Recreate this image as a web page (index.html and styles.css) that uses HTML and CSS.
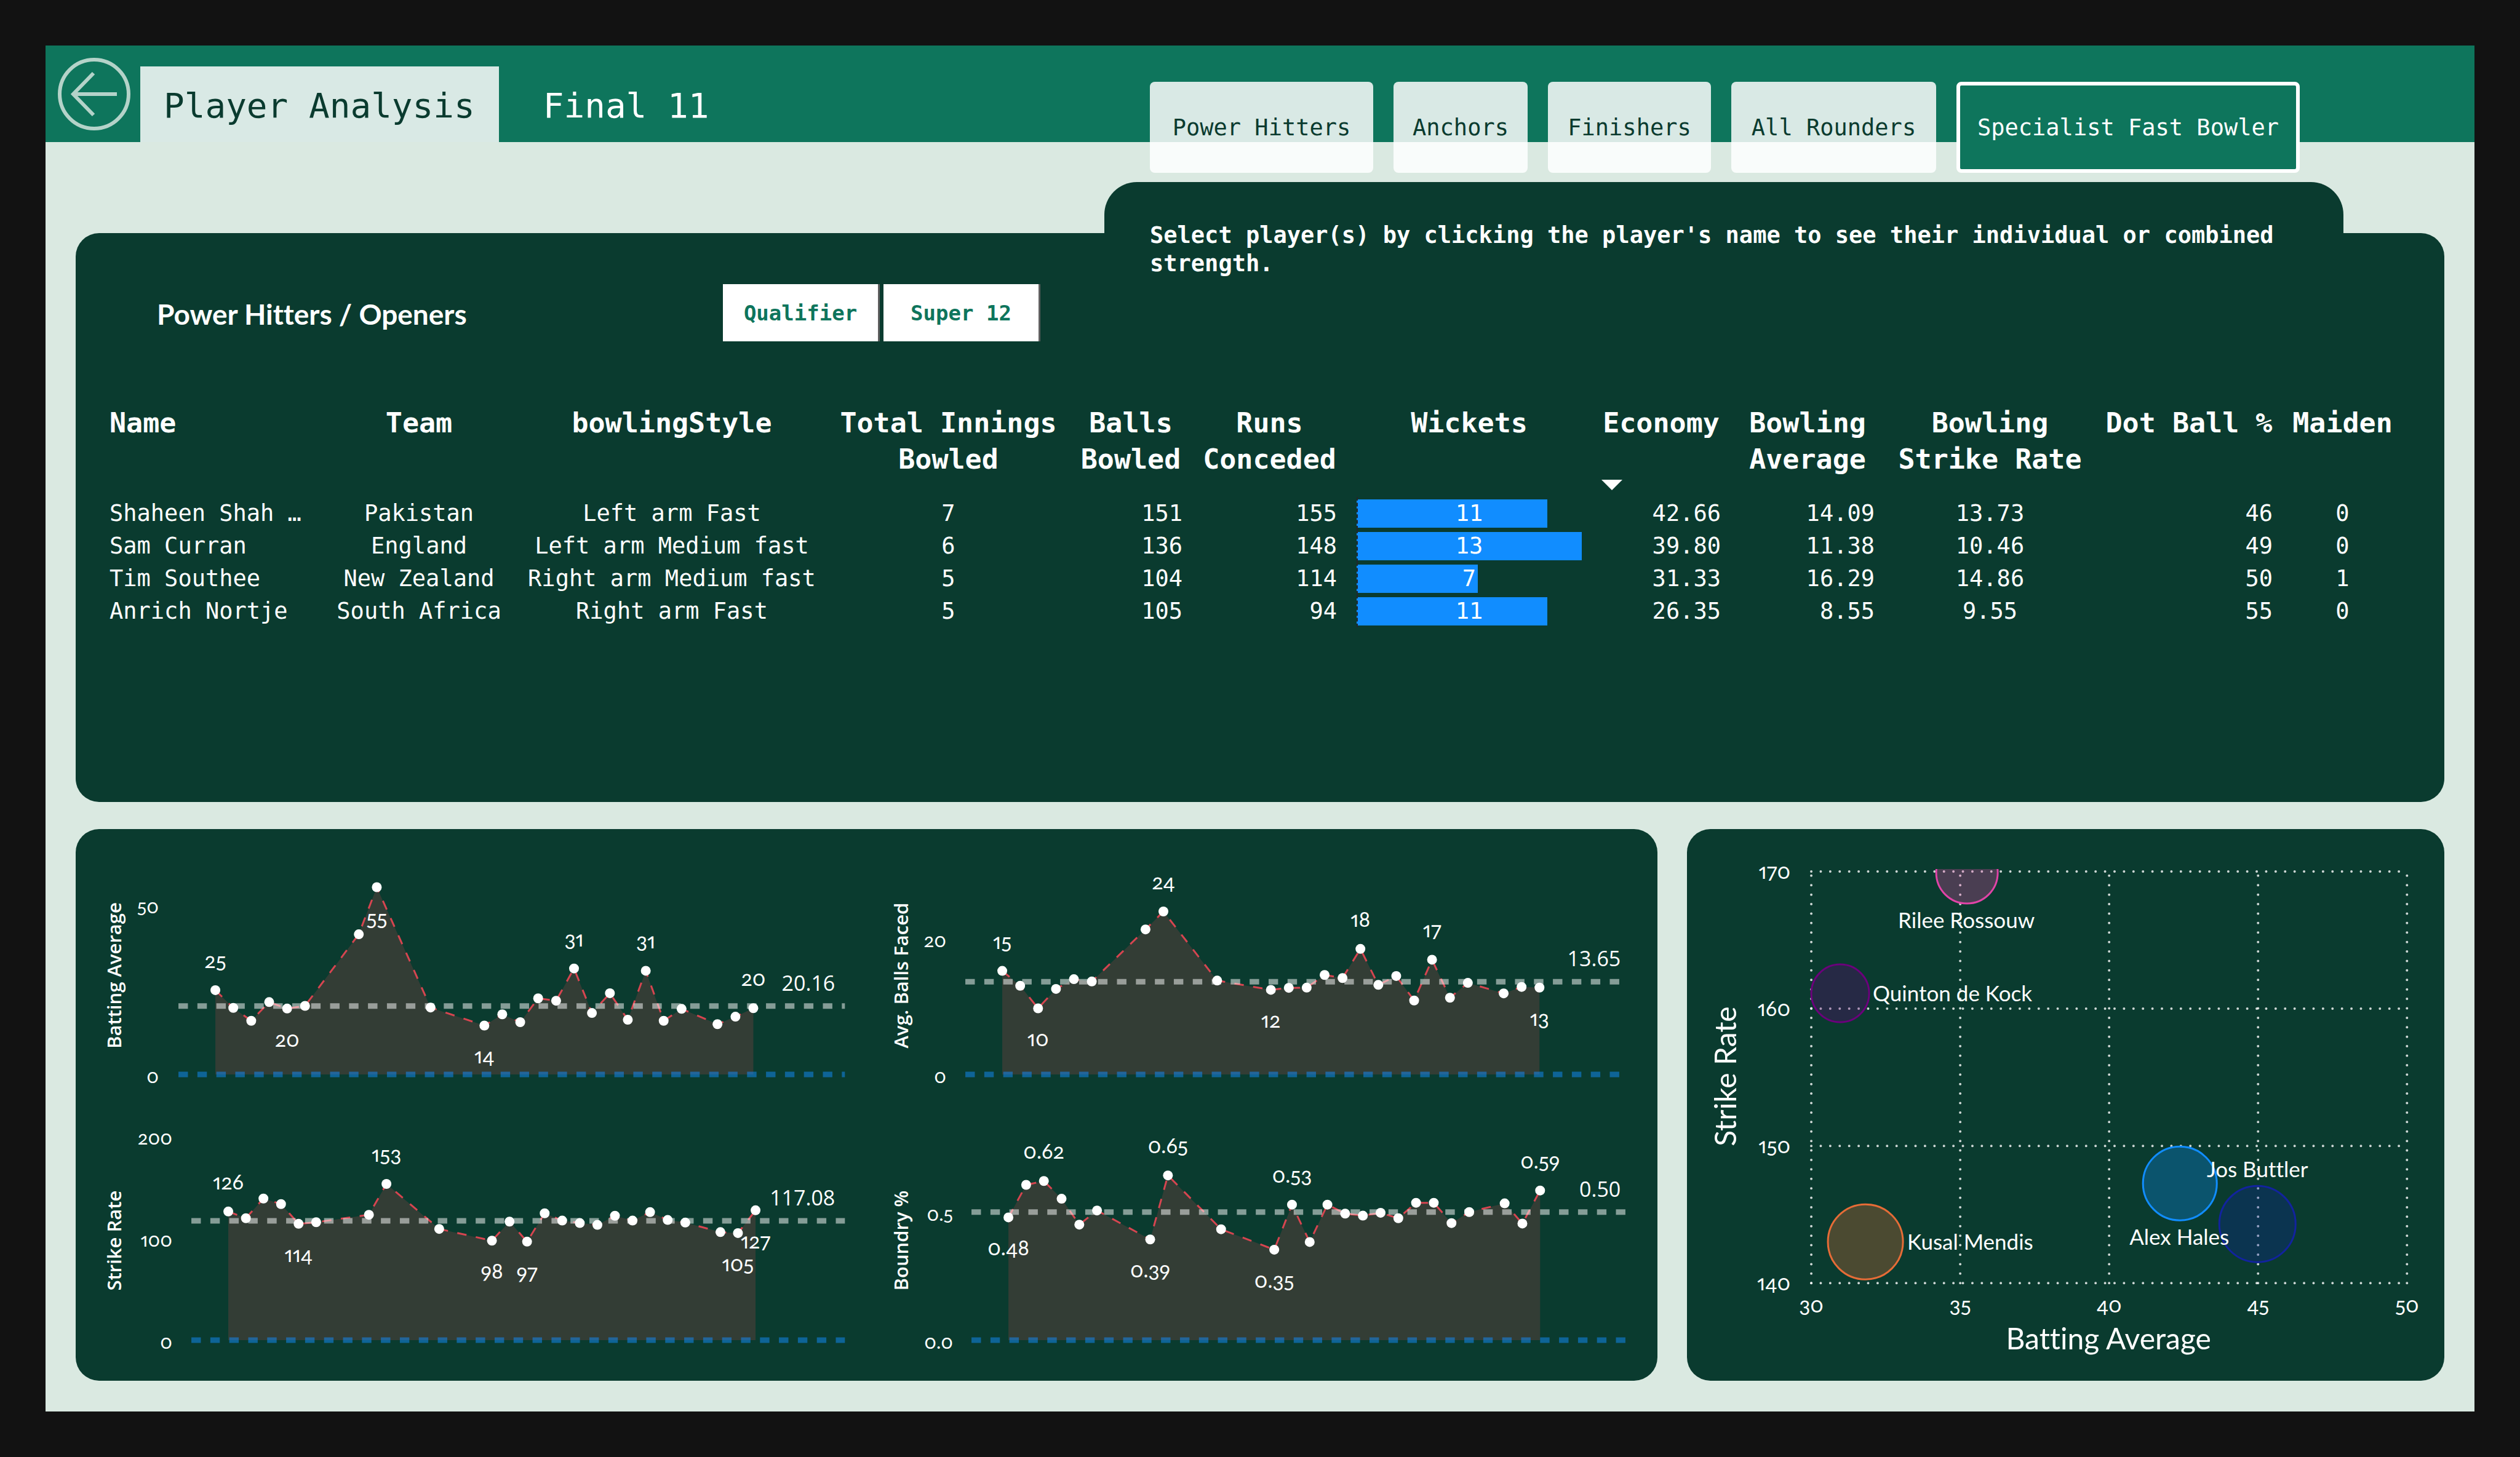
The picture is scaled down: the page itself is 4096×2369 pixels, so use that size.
FILE: index.html
```html
<!DOCTYPE html>
<html lang="en">
<head>
<meta charset="utf-8">
<meta name="viewport" content="width=device-width, initial-scale=1">
<title>Player Analysis</title>
<link rel="stylesheet" href="styles.css">
</head>
<body>
<div class="page">
  <header class="topbar">
    <button class="back" type="button" aria-label="Back">
      <svg viewBox="0 0 118 118" aria-hidden="true"><circle cx="59" cy="59" r="56"/><path d="M96 59H25M58 25L25 59L58 93"/></svg>
    </button>
    <a class="tab tab-active" href="#player">Player Analysis</a>
    <a class="tab" href="#final">Final 11</a>
    <nav class="roles" aria-label="Player role">
      <button type="button" class="role">Power Hitters</button>
      <button type="button" class="role">Anchors</button>
      <button type="button" class="role">Finishers</button>
      <button type="button" class="role">All Rounders</button>
      <button type="button" class="role role-active">Specialist Fast Bowler</button>
    </nav>
  </header>

  <main class="content">
    <p class="note">Select player(s) by clicking the player's name to see their individual or combined strength.</p>

    <section class="panel players">
      <div class="players-head">
        <h1>Power Hitters / Openers</h1>
        <div class="slicer">
          <button type="button">Qualifier</button>
          <button type="button">Super 12</button>
        </div>
      </div>
      <table>
        <colgroup>
          <col class="c-name"><col class="c-team"><col class="c-style"><col class="c-innings"><col class="c-balls"><col class="c-runs">
          <col class="c-wickets"><col class="c-economy"><col class="c-average"><col class="c-rate"><col class="c-dot"><col class="c-maiden">
        </colgroup>
        <thead>
          <tr>
            <th class="left">Name</th><th>Team</th><th>bowlingStyle</th><th>Total Innings<br>Bowled</th><th>Balls<br>Bowled</th><th>Runs<br>Conceded</th>
            <th>Wickets</th><th class="sorted">Economy</th><th>Bowling<br>Average</th><th>Bowling<br>Strike Rate</th><th>Dot Ball %</th><th>Maiden</th>
          </tr>
        </thead>
        <tbody>
          <tr><td class="left">Shaheen Shah …</td><td>Pakistan</td><td>Left arm Fast</td><td>7</td><td class="right">151</td><td class="right">155</td><td><div class="meter"><span class="bar" style="width:84.6%"></span><span>11</span></div></td><td class="right">42.66</td><td class="right">14.09</td><td>13.73</td><td class="right">46</td><td>0</td></tr>
          <tr><td class="left">Sam Curran</td><td>England</td><td>Left arm Medium fast</td><td>6</td><td class="right">136</td><td class="right">148</td><td><div class="meter"><span class="bar" style="width:100%"></span><span>13</span></div></td><td class="right">39.80</td><td class="right">11.38</td><td>10.46</td><td class="right">49</td><td>0</td></tr>
          <tr><td class="left">Tim Southee</td><td>New Zealand</td><td>Right arm Medium fast</td><td>5</td><td class="right">104</td><td class="right">114</td><td><div class="meter"><span class="bar" style="width:53.8%"></span><span>7</span></div></td><td class="right">31.33</td><td class="right">16.29</td><td>14.86</td><td class="right">50</td><td>1</td></tr>
          <tr><td class="left">Anrich Nortje</td><td>South Africa</td><td>Right arm Fast</td><td>5</td><td class="right">105</td><td class="right">94</td><td><div class="meter"><span class="bar" style="width:84.6%"></span><span>11</span></div></td><td class="right">26.35</td><td class="right">8.55</td><td>9.55</td><td class="right">55</td><td>0</td></tr>
        </tbody>
      </table>
    </section>

    <div class="lower">
      <section class="panel trends" id="trends"></section>
      <section class="panel"><svg class="chart" id="scatter" viewBox="0 0 1231 897" role="img" aria-label="Strike rate by batting average"></svg></section>
    </div>
  </main>
</div>
<script src="charts.js"></script>
</body>
</html>
```
FILE: styles.css
```css
* { box-sizing: border-box; }

:root {
  --green: #0e755c;
  --dark: #0a3b2f;
  --mint: #dae9e1;
  --mono: "DejaVu Sans Mono", "Liberation Mono", monospace;
  --humanist: Lato, "Open Sans", sans-serif;
  --sans: "Open Sans", "Noto Sans", sans-serif;
}

body {
  margin: 0;
  padding: 74px;
  background: #121212;
  color: #fff;
  font-family: var(--mono);
  font-size: 37px;
  font-variant-ligatures: none;
}

button { font: inherit; border: 0; cursor: pointer; padding: 0; }
h1, p { margin: 0; }

.page {
  display: flex;
  flex-direction: column;
  min-height: calc(100vh - 148px);
  background: var(--mint);
}

/* Top bar */
.topbar {
  display: flex;
  align-items: flex-end;
  height: 157px;
  background: var(--green);
}
.back {
  width: 118px;
  height: 118px;
  margin: 20px 16px 19px 20px;
  background: none;
}
.back svg { display: block; }
.back circle, .back path { fill: none; stroke: #b4d3c9; stroke-width: 6; }
.tab {
  display: flex;
  align-items: center;
  height: 123px;
  padding: 4px 39px 0 38px;
  color: #fff;
  font-size: 56px;
  text-decoration: none;
}
.tab + .tab { padding-left: 72px; }
.tab-active { background: rgba(255, 255, 255, .845); color: var(--dark); }
.roles {
  display: grid;
  grid-template-columns: 363px 218px 265px 333px 558px;
  gap: 33px;
  align-self: flex-start;
  height: 148px;
  margin: 59px 284px 0 auto;
}
.role {
  border-radius: 8px;
  background: rgba(255, 255, 255, .845);
  color: var(--dark);
}
.role-active { border: 6px solid #fff; background: var(--green); color: #fff; }

/* Content */
.content {
  display: flex;
  flex-direction: column;
  flex: 1;
  padding: 65px 49px 50px;
}
.panel { background: var(--dark); border-radius: 38px; }
.note {
  position: relative;
  align-self: flex-end;
  width: 2014px;
  height: 160px;
  margin: 0 164px -77px 0;
  padding: 64px 74px 0;
  border-radius: 53px 53px 0 0;
  background: var(--dark);
  font-weight: bold;
  line-height: 46px;
}

.players { flex: 1; padding: 83px 69px 60px 39px; }
.players-head {
  display: grid;
  grid-template-columns: 920px auto;
  align-items: center;
  margin: 0 0 103px 93px;
}
h1 { padding-top: 4px; font-family: var(--humanist); font-size: 46px; line-height: 60px; }
.slicer { display: flex; gap: 9px; }
.slicer button {
  width: 252px;
  height: 93px;
  background: #fff;
  box-shadow: 3px 0 0 #5f5f5f;
  color: var(--green);
  font-size: 34px;
  font-weight: bold;
}

table { width: 100%; table-layout: fixed; border-collapse: collapse; }
.c-name { width: 361px; }
.c-team { width: 316px; }
.c-style { width: 506px; }
.c-innings { width: 393px; }
.c-balls { width: 200px; }
.c-runs { width: 251px; }
.c-wickets { width: 398px; }
.c-economy { width: 226px; }
.c-average { width: 250px; }
.c-rate { width: 343px; }
.c-dot { width: 304px; }
.c-maiden { width: 195px; }
th, td { padding: 0 16px; text-align: center; white-space: nowrap; }
th { position: relative; padding-bottom: 32px; font-size: 45px; line-height: 59px; vertical-align: top; }
td { height: 53px; line-height: 53px; }
.left { text-align: left; }
.right { text-align: right; }
.sorted::after {
  content: "";
  position: absolute;
  left: 16px;
  bottom: 11px;
  border: solid transparent;
  border-width: 17px 17px 0;
  border-top-color: #fff;
}
.meter { display: grid; align-items: center; height: 53px; }
.meter > *, .meter::after { grid-area: 1 / 1; }
.meter::after { content: ""; width: 0; height: 53px; border-left: 2px dashed #22262c; }
.bar { height: 46px; background: #118dff; }

/* Charts */
.lower {
  display: grid;
  grid-template-columns: 2570fr 1231fr;
  gap: 48px;
  margin-top: 44px;
}
.trends { display: grid; grid-template-columns: 1fr 1fr; }
.chart { display: block; width: 100%; height: auto; fill: #fff; font-family: var(--humanist); font-variant-numeric: oldstyle-nums proportional-nums; }
.chart .tick { font-size: 31px; }
.chart .value { font-size: 34px; text-anchor: middle; }
.chart .mean-value { font-family: var(--sans); font-size: 34px; font-variant-numeric: normal; text-anchor: end; }
.chart .title { font-family: var(--sans); font-size: 31px; font-weight: 600; text-anchor: middle; }
.chart .value-axis { font-size: 34px; }
.chart .player { font-size: 35px; }
.chart .big-title { font-size: 48px; text-anchor: middle; }
.end { text-anchor: end; }
.middle { text-anchor: middle; }
.area { fill: #d64550; fill-opacity: .2; }
.trend { fill: none; stroke: #d64550; stroke-width: 3; stroke-dasharray: 15.4 15.4; }
.mean, .base { stroke: #fff; stroke-opacity: .5; stroke-width: 9; stroke-dasharray: 15.4 15.4; }
.base { stroke: #118dff; }
.grid { stroke: #fff; stroke-opacity: .8; stroke-width: 4; stroke-linecap: round; stroke-dasharray: 0 15.4; }
.bubble { fill-opacity: .3; stroke-width: 3; }
```
FILE: charts.js
```js
const slots = [0, 1, 2, 3, 4, 5, 8, 9, 12, 15, 16, 17, 18, 19, 20, 21, 22, 23, 24, 25, 26, 28, 29, 30];

const trends = [
  {
    title: 'Batting Average', titleX: 74, titleY: 238, x0: 227, step: 29.14, base: 399, unit: 5.527,
    line: [167, 1250], tickX: 135, ticks: [[0, '0'], [50, '50']], mean: 20.16, meanText: '20.16', meanX: 1234,
    data: [24.8, 19.6, 15.8, 21.3, 19.4, 20.2, 41.25, 55.1, 19.7, 14.4, 17.7, 15.4, 22.4, 21.7, 31.2, 18.1, 23.9, 16.1, 30.5, 15.8, 19.3, 14.8, 17, 19.5],
    labels: [[0, '25', 1], [4, '20', 0], [9, '55', 0], [15, '14', 0], [20, '31', 1], [24, '31', 1], [30, '20', 1]]
  },
  {
    title: 'Avg. Balls Faced', titleX: 68, titleY: 238, x0: 221, step: 29.1, base: 399, unit: 11.04,
    line: [161, 1227], tickX: 130, ticks: [[0, '0'], [20, '20']], mean: 13.65, meanText: '13.65', meanX: 1226,
    data: [15.26, 13.06, 9.75, 12.6, 14.04, 13.7, 21.37, 24, 13.83, 12.46, 12.76, 12.79, 14.66, 14.2, 18.5, 13.2, 14.5, 10.9, 16.9, 11.3, 13.5, 11.95, 12.9, 12.8],
    labels: [[0, '15', 1], [2, '10', 0], [9, '24', 1], [15, '12', 0], [20, '18', 1], [24, '17', 1], [30, '13', 0]]
  },
  {
    title: 'Strike Rate', titleX: 74, titleY: 221, x0: 248, step: 28.56, base: 383, unit: 1.658,
    line: [188, 1250], tickX: 157, ticks: [[0, '0'], [100, '100'], [200, '200']], mean: 117.08, meanText: '117.08', meanX: 1234,
    data: [126.2, 119.6, 138.9, 133.5, 114.1, 115.7, 123, 153.2, 109.1, 97.6, 116.3, 96.6, 124.4, 117.3, 114.9, 113.1, 122, 117.3, 125.6, 117.9, 115.3, 106, 105, 127.4],
    labels: [[0, '126', 1], [4, '114', 0], [9, '153', 1], [15, '98', 0], [17, '97', 0], [29, '105', 0], [30, '127', 0]]
  },
  {
    title: 'Boundry %', titleX: 68, titleY: 221, x0: 231, step: 28.8, base: 383, unit: 416.7,
    line: [171, 1235], tickX: 141, ticks: [[0, '0.0'], [0.5, '0.5']], mean: 0.5, meanText: '0.50', meanX: 1226,
    data: [.479, .606, .621, .552, .451, .506, .393, .643, .433, .353, .529, .383, .529, .494, .486, .497, .476, .536, .536, .457, .5, .534, .455, .584],
    labels: [[0, '0.48', 0], [2, '0.62', 1], [8, '0.39', 0], [9, '0.65', 1], [15, '0.35', 0], [16, '0.53', 1], [30, '0.59', 1]]
  }
];

function text(x, y, cls, label, extra = '') {
  return `<text x="${x}" y="${y}" class="${cls}" ${extra}>${label}</text>`;
}

function drawTrend(c) {
  const x = i => +(c.x0 + i * c.step).toFixed(1);
  const y = v => +(c.base - v * c.unit).toFixed(1);
  const points = c.data.map((v, k) => [x(slots[k]), y(v)]);
  const path = points.map(p => p.join(' ')).join('L');
  const [l, r] = c.line;
  let out = `<path class="area" d="M${x(0)} ${c.base}L${path}L${x(30)} ${c.base}Z"/>`;
  out += `<path class="trend" d="M${path}"/>`;
  out += `<path class="base" d="M${l} ${c.base}H${r}"/><path class="mean" d="M${l} ${y(c.mean)}H${r}"/>`;
  out += points.map(p => `<circle cx="${p[0]}" cy="${p[1]}" r="8"/>`).join('');
  out += c.ticks.map(t => text(c.tickX, y(t[0]) + 14, 'tick end', t[1])).join('');
  out += c.labels.map(([i, label, above]) => text(x(i), y(c.data[slots.indexOf(i)]) + (above ? -36 : 62), 'value', label)).join('');
  out += text(c.meanX, y(c.mean) - 25, 'mean-value', c.meanText);
  out += text(c.titleX, c.titleY, 'title', c.title, `transform="rotate(-90 ${c.titleX} ${c.titleY})"`);
  return `<svg class="chart" viewBox="0 0 1285 448" role="img" aria-label="${c.title}">${out}</svg>`;
}

document.getElementById('trends').innerHTML = trends.map(drawTrend).join('');

const left = 202, right = 1170, top170 = 69, bottom = 738;
let plot = '';
[170, 160, 150, 140].forEach((v, k) => {
  const y = top170 + k * 223;
  plot += `<path class="grid" d="M${left} ${y}H${right}"/>` + text(168, y + 12, 'value-axis end', v);
});
[30, 35, 40, 45, 50].forEach((v, k) => {
  const x = left + k * 242;
  plot += `<path class="grid" d="M${x} ${bottom}V${top170}"/>` + text(x, 786, 'value-axis middle', v);
});
plot += '<clipPath id="plot-area"><rect x="190" y="65" width="990" height="680"/></clipPath><g clip-path="url(#plot-area)">';
[[455, 71, 50, '#e044a7'], [249, 267, 47, '#6b007b'], [290, 671, 61, '#e66c37'], [927, 642, 62, '#12239e'], [801, 576, 60, '#118dff']].forEach(([x, y, r, color]) => {
  plot += `<circle class="bubble" cx="${x}" cy="${y}" r="${r}" fill="${color}" stroke="${color}"/>`;
});
plot += '</g>';
[[454, 161, 'middle', 'Rilee Rossouw'], [302, 280, '', 'Quinton de Kock'], [358, 684, '', 'Kusal Mendis'], [927, 566, 'middle', 'Jos Buttler'], [800, 676, 'middle', 'Alex Hales']].forEach(([x, y, a, name]) => {
  plot += text(x, y, 'player ' + a, name);
});
plot += text(685, 846, 'big-title', 'Batting Average');
plot += text(80, 402, 'big-title', 'Strike Rate', 'transform="rotate(-90 80 402)"');
document.getElementById('scatter').innerHTML = plot;
```
